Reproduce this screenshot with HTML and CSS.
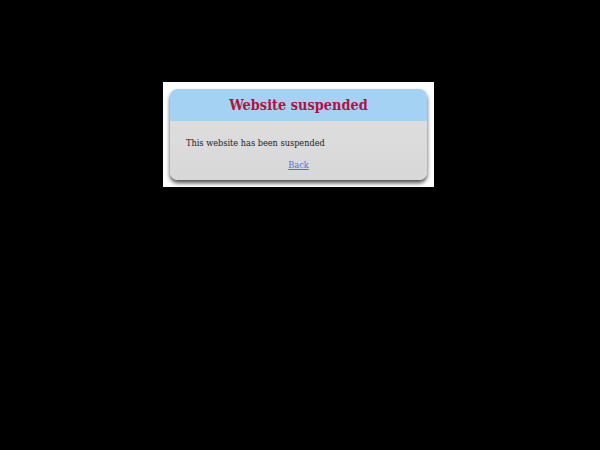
FILE: index.html
```html
<!DOCTYPE html>
<html>
<head>
<meta charset="utf-8">
<link rel="stylesheet" href="styles.css">
</head>
<body>
<div class="frame">
  <div class="card">
    <div class="card-head">Website suspended</div>
    <div class="card-body">
      <p class="msg">This website has been suspended</p>
      <p class="back"><a href="#">Back</a></p>
    </div>
  </div>
</div>
</body>
</html>
```
FILE: styles.css
```css
html, body {
  margin: 0;
  padding: 0;
  background: #000;
}
body {
  font-family: "DejaVu Serif Condensed", "DejaVu Serif", serif;
  font-stretch: condensed;
  padding-top: 82px;
}
.frame {
  width: 257px;
  margin-left: 163px;
  background: #fff;
  padding: 7px;
}
.card {
  border-radius: 8px;
  overflow: hidden;
  background: linear-gradient(#e0e0e0, #d8d8d8);
  box-shadow: 0 3px 4px rgba(0,0,0,0.7);
}
.card-head {
  background: #a3d2f3;
  height: 32px;
  line-height: 31px;
  text-align: center;
  color: #b8103e;
  font-weight: bold;
  font-size: 14.4px;
}
.card-body {
  padding: 17px 16px 10px 16px;
  font-size: 9.1px;
  color: #222;
}
.msg {
  margin: 0 0 12px 0;
}
.back {
  margin: 0;
  text-align: center;
}
.back a {
  color: #5070e0;
}
```
